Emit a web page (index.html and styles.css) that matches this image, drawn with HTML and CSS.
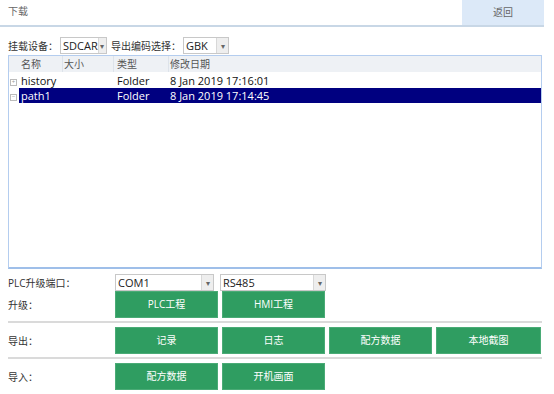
FILE: index.html
```html
<!DOCTYPE html>
<html lang="zh">
<head>
<meta charset="utf-8">
<link rel="stylesheet" href="styles.css">
</head>
<body>
<div class="page">
  <div class="header">
    <div class="title">下载</div>
    <div class="back">返回</div>
  </div>
  <div class="toolbar">
    <span class="lbl">挂载设备：</span>
    <div class="select sel-dev"><span class="val">SDCAR</span><span class="arrow">▾</span></div>
    <span class="lbl lbl2">导出编码选择：</span>
    <div class="select sel-enc"><span class="val">GBK</span><span class="arrow">▾</span></div>
  </div>
  <div class="table">
    <div class="thead">
      <div class="c c0"></div>
      <div class="c c1">名称</div>
      <div class="c c2">大小</div>
      <div class="c c3">类型</div>
      <div class="c c4">修改日期</div>
    </div>
    <div class="row">
      <div class="c c0"><span class="tree">+</span></div>
      <div class="c c1">history</div>
      <div class="c c2"></div>
      <div class="c c3">Folder</div>
      <div class="c c4">8 Jan 2019 17:16:01</div>
    </div>
    <div class="row sel">
      <div class="c c0"><span class="tree">−</span></div>
      <div class="c c1 hl">path1</div>
      <div class="c c2 hl"></div>
      <div class="c c3 hl">Folder</div>
      <div class="c c4 hl">8 Jan 2019 17:14:45</div>
    </div>
  </div>
  <div class="ops">
    <div class="oprow port">
      <span class="oplbl">PLC升级端口：</span>
      <div class="select sel-port"><span class="val">COM1</span><span class="arrow">▾</span></div>
      <div class="select sel-port2"><span class="val">RS485</span><span class="arrow">▾</span></div>
    </div>
    <div class="oprow">
      <span class="oplbl">升级：</span>
      <div class="btn">PLC工程</div>
      <div class="btn">HMI工程</div>
    </div>
    <div class="sep"></div>
    <div class="oprow">
      <span class="oplbl">导出：</span>
      <div class="btn">记录</div>
      <div class="btn">日志</div>
      <div class="btn">配方数据</div>
      <div class="btn wide">本地截图</div>
    </div>
    <div class="sep"></div>
    <div class="oprow">
      <span class="oplbl">导入：</span>
      <div class="btn">配方数据</div>
      <div class="btn">开机画面</div>
    </div>
  </div>
</div>
</body>
</html>
```
FILE: styles.css
```css
html, body {
  margin: 0;
  padding: 0;
  background: #ffffff;
}
body {
  font-family: "Open Sans", "Noto Sans CJK SC", sans-serif;
  font-size: 11px;
  color: #333;
}
.page {
  width: 554px;
  height: 394px;
  overflow: hidden;
}
.header {
  display: flex;
  width: 544px;
  height: 25px;
  border-bottom: 2px solid #c8d7e6;
}
.title {
  flex: 1;
  padding-left: 8px;
  line-height: 22px;
  color: #666;
  font-size: 10px;
}
.back {
  width: 82px;
  background: #dce9f8;
  color: #666;
  text-align: center;
  line-height: 24px;
  font-size: 10px;
}
.toolbar {
  display: flex;
  align-items: center;
  margin-top: 10px;
  padding-left: 8px;
  height: 17px;
  white-space: nowrap;
}
.lbl {
  color: #333;
  font-size: 10px;
  margin-right: 2px;
  white-space: nowrap;
}
.lbl2 {
  margin-left: 4px;
  margin-right: 2px;
}
.select {
  display: flex;
  align-items: stretch;
  height: 15px;
  border: 1px solid #c8c8c8;
  background: #fff;
  box-sizing: content-box;
}
.select .val {
  flex: 1;
  padding-left: 2px;
  line-height: 15px;
  color: #222;
  font-size: 11px;
}
.select .arrow {
  width: 11px;
  background: #eeeeee;
  border-left: 1px solid #d8d8d8;
  color: #666;
  font-size: 8px;
  line-height: 15px;
  text-align: center;
}
.sel-dev { width: 45px; }
.sel-enc { width: 44px; }
.table {
  margin-left: 8px;
  margin-top: 1px;
  width: 532px;
  height: 211px;
  border: 1px solid #b4cdef;
  border-bottom: 2px solid #9fbfe9;
}
.thead, .row {
  display: flex;
  height: 15px;
  line-height: 15px;
}
.thead {
  height: 16px;
  line-height: 16px;
  background: #eef1f5;
  color: #555;
  margin-bottom: 1px;
  font-size: 10px;
}
.thead .c {
  border-right: 1px solid #dde3ea;
}
.thead .c0 { border-right: none; }
.thead .c4 { border-right: none; }
.c { box-sizing: border-box; white-space: nowrap; }
.c0 { width: 10px; }
.c1 { width: 44px; padding-left: 2px; }
.c2 { width: 51px; padding-left: 1px; }
.c3 { width: 55px; padding-left: 3px; }
.c4 { flex: 1; padding-left: 1px; }
.thead .c1 { padding-left: 2px; }
.row { color: #111; }
.row.sel .hl {
  background: #000080;
  color: #fff;
}
.tree {
  display: inline-block;
  width: 5px;
  height: 5px;
  margin-left: 1px;
  border: 1px solid #bbb;
  font-size: 6px;
  line-height: 5px;
  text-align: center;
  color: #999;
  vertical-align: middle;
}
.ops {
  padding-left: 8px;
  margin-top: 5px;
  width: 534px;
}
.oprow {
  display: flex;
  align-items: center;
  gap: 4px;
}
.oplbl {
  width: 103px;
  color: #333;
  font-size: 10px;
  white-space: nowrap;
}
.port {
  height: 17px;
}
.sel-port { width: 97px; }
.sel-port2 { width: 104px; margin-left: 2px; }
.btn {
  width: 101px;
  height: 25px;
  background: #2f9d61;
  border: 1px solid #4aab76;
  color: #fff;
  text-align: center;
  line-height: 25px;
  font-size: 10px;
}
.btn.wide { width: 103px; }
.sep {
  height: 2px;
  background: #dadada;
  margin: 3px 0 4px 0;
}
```
